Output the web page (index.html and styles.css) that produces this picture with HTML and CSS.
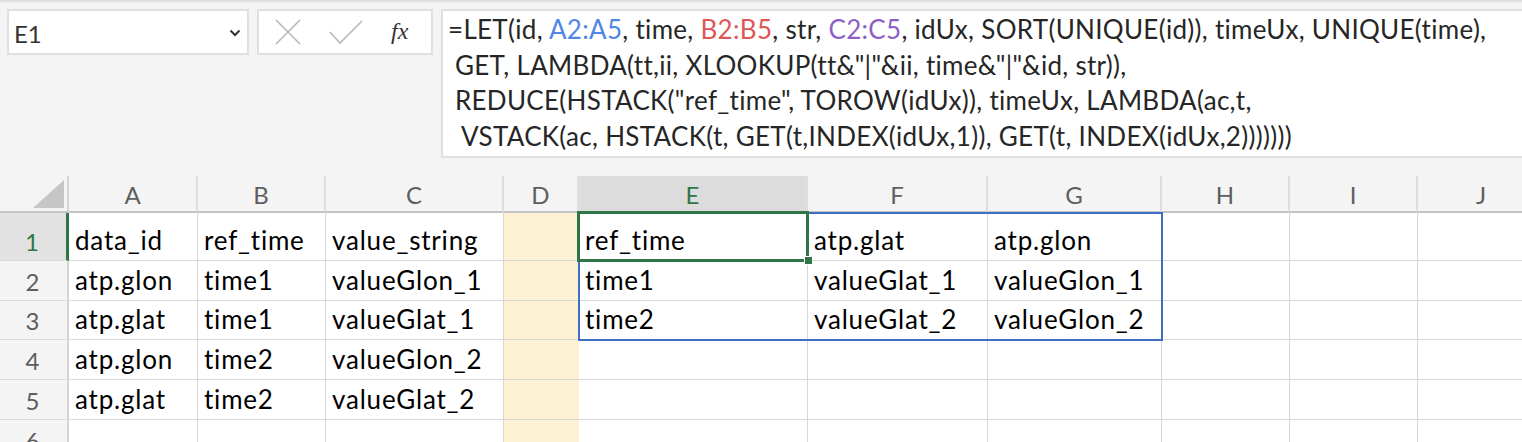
FILE: index.html
```html
<!DOCTYPE html>
<html>
<head>
<meta charset="utf-8">
<link rel="stylesheet" href="styles.css">
</head>
<body>
<div class="app">
  <div class="toolbar">
    <div class="namebox">
      <span class="name">E1</span>
      <svg class="chev" width="12" height="8" viewBox="0 0 12 8"><path d="M1.5 1.5 L6 6 L10.5 1.5" fill="none" stroke="#333" stroke-width="2"/></svg>
    </div>
    <div class="iconbox">
      <svg class="ic" width="26" height="26" viewBox="0 0 26 26"><path d="M1 1 L25 25 M25 1 L1 25" stroke="#b8b8b8" stroke-width="1.6" fill="none"/></svg>
      <svg class="ic" width="34" height="26" viewBox="0 0 34 26"><path d="M1 13 L11 24 L33 2" stroke="#b8b8b8" stroke-width="1.6" fill="none"/></svg>
      <span class="fx">fx</span>
    </div>
    <div class="formula"><div class="fline">=LET(id, <span class="r1">A2:A5</span>, time, <span class="r2">B2:B5</span>, str, <span class="r3">C2:C5</span>, idUx, SORT(UNIQUE(id)), timeUx, UNIQUE(time),</div><div class="fline"> GET, LAMBDA(tt,ii, XLOOKUP(tt&amp;"|"&amp;ii, time&amp;"|"&amp;id, str)),</div><div class="fline"> REDUCE(HSTACK("ref_time", TOROW(idUx)), timeUx, LAMBDA(ac,t,</div><div class="fline">  VSTACK(ac, HSTACK(t, GET(t,INDEX(idUx,1)), GET(t, INDEX(idUx,2)))))))</div></div>
  </div>

  <div class="sheet">
    <div class="corner"><div class="tri"></div></div>
    <div class="ch">A</div><div class="ch">B</div><div class="ch">C</div><div class="ch">D</div><div class="ch sel">E</div><div class="ch">F</div><div class="ch">G</div><div class="ch">H</div><div class="ch">I</div><div class="ch">J</div>

    <div class="rh sel">1</div>
    <div class="c">data_id</div><div class="c">ref_time</div><div class="c">value_string</div><div class="c d"></div><div class="c">ref_time</div><div class="c">atp.glat</div><div class="c">atp.glon</div><div class="c"></div><div class="c"></div><div class="c"></div>

    <div class="rh">2</div>
    <div class="c">atp.glon</div><div class="c">time1</div><div class="c">valueGlon_1</div><div class="c d"></div><div class="c">time1</div><div class="c">valueGlat_1</div><div class="c">valueGlon_1</div><div class="c"></div><div class="c"></div><div class="c"></div>

    <div class="rh">3</div>
    <div class="c">atp.glat</div><div class="c">time1</div><div class="c">valueGlat_1</div><div class="c d"></div><div class="c">time2</div><div class="c">valueGlat_2</div><div class="c">valueGlon_2</div><div class="c"></div><div class="c"></div><div class="c"></div>

    <div class="rh">4</div>
    <div class="c">atp.glon</div><div class="c">time2</div><div class="c">valueGlon_2</div><div class="c d"></div><div class="c"></div><div class="c"></div><div class="c"></div><div class="c"></div><div class="c"></div><div class="c"></div>

    <div class="rh">5</div>
    <div class="c">atp.glat</div><div class="c">time2</div><div class="c">valueGlat_2</div><div class="c d"></div><div class="c"></div><div class="c"></div><div class="c"></div><div class="c"></div><div class="c"></div><div class="c"></div>

    <div class="rh">6</div>
    <div class="c"></div><div class="c"></div><div class="c"></div><div class="c d"></div><div class="c"></div><div class="c"></div><div class="c"></div><div class="c"></div><div class="c"></div><div class="c"></div>

    <div class="spill"></div>
    <div class="active"><div class="handle"></div></div>
  </div>
</div>
</body>
</html>
```

FILE: styles.css
```css
* { box-sizing: border-box; }
html, body { margin: 0; padding: 0; }
body {
  background: #f4f4f4;
  font-family: "Lato", "Noto Sans", sans-serif;
  width: 1522px;
  height: 442px;
  overflow: hidden;
}
.app {
  height: 442px;
  overflow: hidden;
  box-shadow: inset 0 3px 3px -2px rgba(0,0,0,0.15);
}
.toolbar {
  display: flex;
  align-items: flex-start;
  gap: 8px;
  padding: 9px 0 0 7px;
  height: 176px;
}
.namebox {
  width: 242px;
  height: 46px;
  background: #fff;
  border: 2px solid #e0e0e0;
  display: flex;
  align-items: center;
  justify-content: space-between;
  padding: 0 6px 0 5px;
}
.name {
  font-size: 24px;
  color: #333;
  padding-top: 2px;
}
.chev { margin-top: 2px; }
.iconbox {
  width: 176px;
  height: 46px;
  background: #fff;
  border: 2px solid #e0e0e0;
  display: flex;
  align-items: center;
  padding: 0 0 0 16px;
}
.iconbox .ic:first-child { margin-right: 28px; }
.iconbox .ic:nth-child(2) { margin-right: 28px; }
.fx {
  font-family: "Liberation Serif", "DejaVu Serif", serif;
  font-style: italic;
  font-size: 24px;
  color: #333;
  margin-top: -2px;
}
.formula {
  flex: 1;
  height: 149px;
  background: #fff;
  border: 2px solid #e0e0e0;
  border-right: none;
  padding: 1px 0 0 5px;
  color: #262626;
  font-size: 26px;
  letter-spacing: 0.3px;
  line-height: 35.7px;
  white-space: pre;
  overflow: hidden;
}
.r1 { color: #4f86e8; }
.r2 { color: #df5656; }
.r3 { color: #8d5fc6; }

.sheet {
  position: relative;
  display: grid;
  grid-template-columns: 69px 129px 128px 178px 75px 229px 180px 174px 128px 128px 128px;
  grid-template-rows: 37px 48px 40px 39px 40px 40px 40px;
}
.corner {
  background: #f4f4f4;
  border-right: 2px solid #d4d4d4;
  border-bottom: 2px solid #c4c4c4;
  display: flex;
  justify-content: flex-end;
  align-items: flex-end;
  padding: 0 3px 3px 0;
}
.tri {
  width: 0;
  height: 0;
  border-left: 31px solid transparent;
  border-bottom: 28px solid #c6c6c6;
}
.ch {
  background: #f4f4f4;
  border-right: 2px solid #dedede;
  border-bottom: 2px solid #c4c4c4;
  color: #5e5e5e;
  font-size: 24px;
  display: flex;
  align-items: center;
  justify-content: center;
  padding-top: 1px;
}
.ch.sel {
  background: #dcdcdc;
  color: #2f7548;
}
.rh {
  background: #f4f4f4;
  border-right: 2px solid #d4d4d4;
  border-bottom: 1px solid #dcdcdc;
  color: #5e5e5e;
  font-size: 24px;
  display: flex;
  align-items: flex-end;
  justify-content: center;
  padding-bottom: 4px;
  padding-right: 2px;
}
.rh.sel {
  background: #e2e2e2;
  color: #2f7548;
  border-right: 3px solid #2f7548;
}
.c {
  background: #fff;
  border-right: 1px solid #d8d8d8;
  border-bottom: 1px solid #d8d8d8;
  font-size: 26px;
  letter-spacing: 0.8px;
  color: #000;
  display: flex;
  align-items: flex-end;
  padding: 0 0 4px 6px;
  white-space: nowrap;
  overflow: hidden;
}
.c.d {
  background: #fcf1d3;
  border-right: none;
}
.spill {
  position: absolute;
  left: 578px;
  top: 36px;
  width: 585px;
  height: 129px;
  border: 2px solid #3f6fc4;
}
.active {
  position: absolute;
  left: 577px;
  top: 35px;
  width: 232px;
  height: 51px;
  border: 3px solid #2f7548;
}
.handle {
  position: absolute;
  right: -7px;
  bottom: -6px;
  width: 9px;
  height: 9px;
  background: #2f7548;
  border: 1px solid #fff;
}
```
